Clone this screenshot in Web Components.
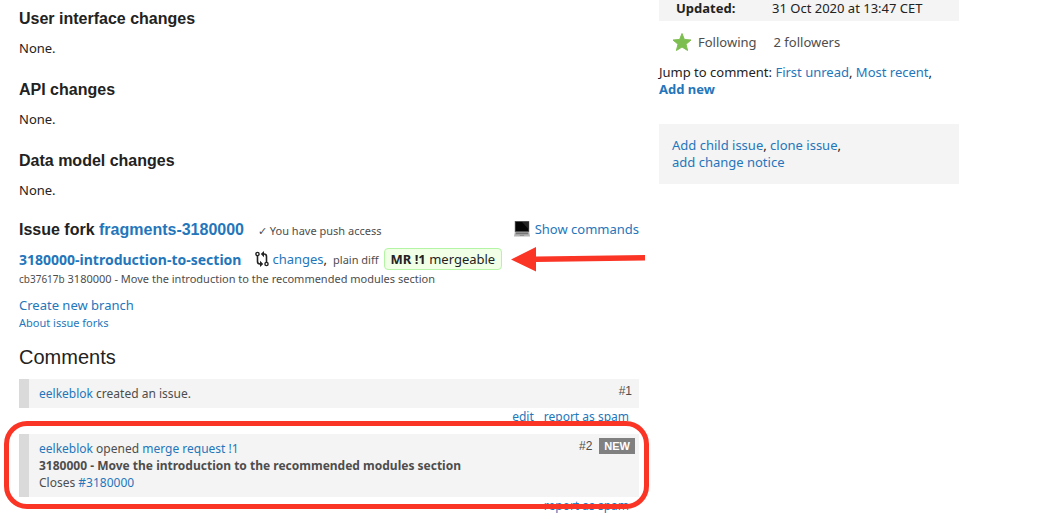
<!DOCTYPE html>
<html lang="en">
<head>
<meta charset="utf-8">
<title>Issue fork</title>
<style>
body{margin:0;background:#fff;color:#222;font:13px/17px "Noto Sans","Open Sans",sans-serif}
</style>
</head>
<body>
<issue-page></issue-page>
<script>
const base = `<style>
:host{display:block}
*{box-sizing:border-box}
a{color:#2476bb;text-decoration:none}
a:hover{text-decoration:underline}
h2,h3,p{margin:0}
h3{font:bold 16px/20px "Liberation Sans",Arial,sans-serif}
</style>`;
const define = (name, html) => customElements.define(name, class extends HTMLElement {
  constructor() {
    super();
    this.attachShadow({mode: 'open'}).innerHTML = base + html;
  }
});

define('issue-section', `
<style>:host{margin-bottom:23px} p{margin-top:11px}</style>
<h3><slot name="title"></slot></h3><p><slot></slot></p>`);

define('branch-icon', `
<style>:host{display:inline-flex;width:14px;height:16px;color:#222} svg{display:block}</style>
<svg width="14" height="16" viewBox="0 0 14 16" fill="none" stroke="currentColor" stroke-width="1.6" aria-hidden="true">
<circle cx="2.5" cy="3" r="1.6" stroke-width="1.4"/><circle cx="11.5" cy="13" r="1.6" stroke-width="1.4"/>
<path d="M2.5 4.6V10.5Q2.5 13 5 13H6M11.5 11.4V5.5Q11.5 3 9 3H8"/>
<path d="M5 9.8V16L8.2 13ZM9 0V6.2L5.8 3Z" fill="currentColor" stroke="none"/></svg>`);

define('laptop-icon', `
<style>:host{display:inline-flex;width:16px;height:16px} svg{display:block}</style>
<svg width="16" height="16" viewBox="0 0 16 16" aria-hidden="true">
<path d="M1.2 0H14.8Q15.2 0 15.2.5V11H.8V.5Q.8 0 1.2 0Z" fill="#555"/>
<path d="M1.6 1H14.4V10H1.6Z" fill="#050505"/><path d="M8 1H14.4V8Z" fill="#242424"/>
<path d="M.8 11H15.2L16 15.5H0Z" fill="#b4b4b4"/><path d="M2 11.5H14L14.4 13.2H1.6Z" fill="#777"/>
<path d="M6 13.7H10L10.3 15H5.7Z" fill="#929292"/></svg>`);

define('merge-status', `
<style>:host{display:block;border:1px solid #b4f5a5;border-radius:4px;background:#f0ffe6;padding:0 6px;line-height:20px;margin-left:5px;white-space:nowrap}</style>
<slot></slot>`);

define('pointer-arrow', `
<style>:host{position:absolute;left:100%;top:-2px;margin-left:9px;width:134px;height:26px} svg{display:block}</style>
<svg width="134" height="26" viewBox="0 0 134 26" aria-hidden="true"><path d="M0 13.5L25 1V10.5L134 9V14.5L25 16V25.5Z" fill="#fb3526"/></svg>`);

define('issue-fork', `
<style>
.row{display:flex;align-items:center;white-space:nowrap}
.head{height:20px;margin-top:-2px}
.access{font-size:11px;color:#4d4d4d;margin-left:14px;padding-top:1px}
.show{margin-left:auto;display:flex;gap:5px;align-items:center;align-self:flex-start;line-height:18px}
.branch{height:22px;margin-top:8px}
.name{font-size:14px}
.branch branch-icon{margin:0 3px 0 14px}
small{font-size:11px;color:#4d4d4d;margin-left:6px}
.status{position:relative}
.commit{font-size:11px;line-height:16px;color:#4d4d4d;margin-top:1px}
.hash{font-size:10px}
.new{margin-top:10px}
.about{font-size:11px;line-height:16px;margin-top:1px}
</style>
<div class="row head"><h3>Issue fork <a href="#fork">fragments-3180000</a></h3><span class="access">✓ You have push access</span>
<a class="show" href="#commands"><laptop-icon></laptop-icon>Show commands</a></div>
<div class="row branch"><a class="name" href="#branch"><b>3180000-introduction-to-section</b></a><branch-icon></branch-icon><span><a href="#changes">changes</a>,</span><small>plain diff</small>
<div class="status"><merge-status><b>MR !1</b> mergeable</merge-status><pointer-arrow></pointer-arrow></div></div>
<p class="commit"><span class="hash">cb37617b</span> 3180000 - Move the introduction to the recommended modules section</p>
<p class="new"><a href="#new-branch">Create new branch</a></p>
<p class="about"><a href="#about">About issue forks</a></p>`);

define('issue-comment', `
<style>
:host{font-size:12px;color:#4d4d4d;margin-bottom:9px}
.box{position:relative;display:flex;justify-content:space-between;background:#f4f4f4;border-left:10px solid #dadada;padding:6px 4px 6px 10px}
.meta{display:flex;align-items:center;gap:7px;height:16px;margin-top:-2px;padding-right:3px;font-family:"Liberation Sans",Arial,sans-serif}
:host([new]) .meta{padding-right:0}
.links{display:flex;justify-content:flex-end;gap:10px;padding-right:10px}
</style>
<div class="box"><div><slot></slot></div><div class="meta"><slot name="meta"></slot></div><slot name="mark"></slot></div>
<div class="links"><slot name="links"></slot></div>`);

define('new-badge', `
<style>:host{background:#808080;color:#fff;font:bold 11px/16px "Liberation Sans",Arial,sans-serif;padding:0 5px}</style><slot></slot>`);

define('highlight-ring', `
<style>:host{position:absolute;inset:-13px -10px -12px -25px;border:5px solid #fb3526;border-radius:23px;pointer-events:none}</style>`);

define('issue-sidebar', `
<style>
table{width:100%;border-collapse:collapse;background:#f4f4f4;height:21px}
th,td{padding:0 0 4px;text-align:left;line-height:17px}
th{width:113px;padding-left:17px}
.follow{display:flex;align-items:center;gap:6px;margin:12px 0 13px 13px;color:#4d4d4d}
.follow a{color:inherit}
.follow span{margin-left:11px}
.actions{background:#f4f4f4;padding:13px;margin-top:26px}
</style>
<table><tbody><tr><th scope="row">Updated:</th><td>31 Oct 2020 at 13:47 CET</td></tr></tbody></table>
<div class="follow"><svg width="20" height="18" viewBox="0 0 20 18" aria-hidden="true"><path d="M10 .5L12.4 6.5L19 7L14 11.2L15.6 17.5L10 14L4.4 17.5L6 11.2L1 7L7.6 6.5Z" fill="#7dbe50" stroke="#7dbe50" stroke-linejoin="round"/></svg><a href="#follow">Following</a><span>2 followers</span></div>
<p>Jump to comment: <a href="#unread">First unread</a>, <a href="#recent">Most recent</a>,<br><a href="#add"><b>Add new</b></a></p>
<div class="actions"><a href="#child">Add child issue</a>, <a href="#clone">clone issue</a>,<br><a href="#notice">add change notice</a></div>`);

define('issue-page', `
<style>
:host{display:grid;grid-template-columns:minmax(0,1fr) 300px;gap:20px;padding:0 94px 0 19px}
main{padding-top:9px}
a{color:#2476bb}
h2{font:20px/24px "Liberation Sans",Arial,sans-serif;margin:14px 0 10px}
</style>
<main>
<issue-section><span slot="title">User interface changes</span>None.</issue-section>
<issue-section><span slot="title">API changes</span>None.</issue-section>
<issue-section><span slot="title">Data model changes</span>None.</issue-section>
<issue-fork></issue-fork>
<h2>Comments</h2>
<issue-comment><a href="#user">eelkeblok</a> created an issue.<span slot="meta">#1</span><a slot="links" href="#edit">edit</a><a slot="links" href="#spam1">report as spam</a></issue-comment>
<issue-comment new><a href="#user">eelkeblok</a> opened <a href="#mr">merge request !1</a><br><b>3180000 - Move the introduction to the recommended modules section</b><br>Closes <a href="#issue">#3180000</a><span slot="meta">#2</span><new-badge slot="meta">NEW</new-badge><highlight-ring slot="mark"></highlight-ring><a slot="links" href="#spam2">report as spam</a></issue-comment>
</main>
<issue-sidebar></issue-sidebar>`);
</script>
</body>
</html>
